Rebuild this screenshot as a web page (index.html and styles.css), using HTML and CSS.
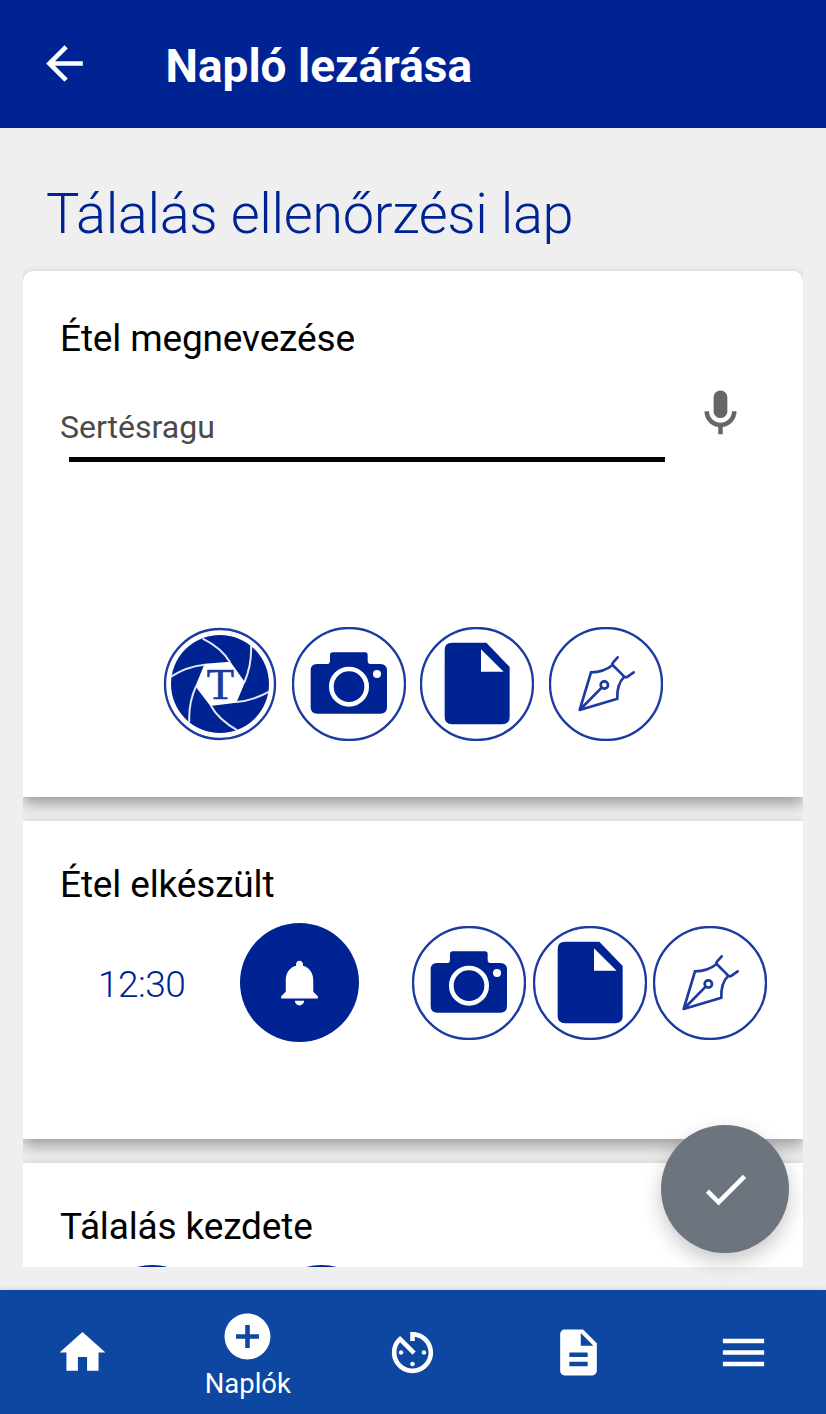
FILE: index.html
```html
<!DOCTYPE html>
<html lang="hu">

<head>
    <meta charset="UTF-8">
    <meta name="viewport" content="width=device-width, initial-scale=1.0">
    <title>Napló lezárása</title>
    <link rel="stylesheet" href="styles.css">
</head>

<body>

    <!-- Shared button icons -->
    <svg class="sprite" width="0" height="0">
        <symbol id="camera" viewBox="0 0 342 342">
            <circle class="ring" cx="171" cy="171" r="168" />
            <path class="fill" d="M74 111h30q10 0 10-10V84q0-8 8-8h97q8 0 8 8v17q0 10 10 10h28q20 0 20 20v109q0 20-20 20H76q-20 0-20-20V131q0-20 18-20z" />
            <circle class="lens" cx="171" cy="179" r="53" />
            <circle class="paper" cx="255" cy="141" r="12" />
        </symbol>
        <symbol id="document" viewBox="0 0 342 342">
            <circle class="ring" cx="171" cy="171" r="168" />
            <path class="fill" d="M96 47H199L269 120V270q0 22-22 22H96q-22 0-22-22V69q0-22 22-22z" />
            <path class="paper" d="M183 67V134H251z" />
        </symbol>
        <symbol id="pen" viewBox="0 0 342 342">
            <circle class="ring" cx="171" cy="171" r="168" />
            <path class="line" d="M92 249L126 136Q164 136 191 114L226 149Q203 172 205 215L92 249L158 182M206 91L192 107Q188 111 192 115M222 146Q228 153 234 150L254 136" />
            <circle class="line" cx="166" cy="174" r="11" />
        </symbol>
    </svg>

    <header class="topbar">
        <svg class="icon" viewBox="0 0 24 24"><path d="M20 11H7.83l5.59-5.59L12 4l-8 8 8 8 1.41-1.41L7.83 13H20v-2z" /></svg>
        <h1>Napló lezárása</h1>
    </header>

    <main class="content">
        <h2 class="page-title">Tálalás ellenőrzési lap</h2>

        <section class="card card-name">
            <h3>Étel megnevezése</h3>
            <div class="field">
                <div class="field-input">
                    <span>Sertésragu</span>
                </div>
                <svg class="icon mic" viewBox="0 0 24 24"><path d="M12 14c1.66 0 2.99-1.34 2.99-3L15 5c0-1.66-1.34-3-3-3S9 3.34 9 5v6c0 1.66 1.34 3 3 3zm5-3c0 2.76-2.24 5-5 5s-5-2.24-5-5H5c0 3.53 2.61 6.43 6 6.92V21h2v-3.08c3.39-.49 6-3.39 6-6.92h-2z" /></svg>
            </div>
            <div class="actions">
                <svg class="action" viewBox="0 0 342 342">
                    <circle class="ring" cx="171" cy="171" r="165" />
                    <circle class="fill" cx="171" cy="171" r="147" />
                    <path class="paper" d="M125 110L202 104L246 166L220 227L142 237L97 178z" />
                    <path class="blades" d="M119 35Q176 63 201 106M264 56Q267 113 244 166M318 194Q271 221 219 225M223 310Q166 278 143 235M79 285Q76 228 99 178M24 149Q71 118 126 113" />
                    <text x="172" y="216" text-anchor="middle">T</text>
                </svg>
                <svg class="action"><use href="#camera" /></svg>
                <svg class="action"><use href="#document" /></svg>
                <svg class="action"><use href="#pen" /></svg>
            </div>
        </section>

        <section class="card card-ready">
            <h3>Étel elkészült</h3>
            <div class="time-row">
                <span class="time">12:30</span>
                <div class="bell">
                    <svg class="icon" viewBox="0 0 24 24"><path d="M12 22c1.1 0 2-.9 2-2h-4c0 1.1.89 2 2 2zm6-6v-5c0-3.07-1.64-5.64-4.5-6.32V4c0-.83-.67-1.5-1.5-1.5s-1.5.67-1.5 1.5v.68C7.63 5.36 6 7.92 6 11v5l-2 2v1h16v-1l-2-2z" /></svg>
                </div>
                <div class="actions">
                    <svg class="action"><use href="#camera" /></svg>
                    <svg class="action"><use href="#document" /></svg>
                    <svg class="action"><use href="#pen" /></svg>
                </div>
            </div>
        </section>

        <section class="card card-start">
            <h3>Tálalás kezdete</h3>
            <div class="start-row">
                <div class="bell"></div>
                <div class="bell"></div>
            </div>
        </section>
    </main>

    <!-- Floating save button -->
    <div class="fab">
        <svg class="icon" viewBox="0 0 24 24"><path d="M9 16.17L4.83 12l-1.42 1.41L9 19 21 7l-1.41-1.41z" /></svg>
    </div>

    <nav class="bottom-nav">
        <a><svg class="icon" viewBox="0 0 24 24"><path d="M10 20v-6h4v6h5v-8h3L12 3 2 12h3v8z" /></svg></a>
        <a class="active">
            <svg class="icon" viewBox="0 0 24 24"><path d="M12 2C6.48 2 2 6.48 2 12s4.48 10 10 10 10-4.48 10-10S17.52 2 12 2zm5 11h-4v4h-2v-4H7v-2h4V7h2v4h4v2z" /></svg>
            <span>Naplók</span>
        </a>
        <a><svg class="icon" viewBox="0 0 24 24"><path d="M11 17c0 .55.45 1 1 1s1-.45 1-1-.45-1-1-1-1 .45-1 1zm0-14v4h2V5.08c3.39.49 6 3.39 6 6.92 0 3.87-3.13 7-7 7s-7-3.13-7-7c0-1.68.59-3.22 1.58-4.42L12 13l1.41-1.41-6.8-6.8v.02C4.42 6.45 3 9.05 3 12c0 4.97 4.02 9 9 9 4.97 0 9-4.03 9-9s-4.03-9-9-9h-1zm7 9c0-.55-.45-1-1-1s-1 .45-1 1 .45 1 1 1 1-.45 1-1zM6 12c0 .55.45 1 1 1s1-.45 1-1-.45-1-1-1-1 .45-1 1z" /></svg></a>
        <a><svg class="icon" viewBox="0 0 24 24"><path d="M14 2H6c-1.1 0-1.99.9-1.99 2L4 20c0 1.1.89 2 1.99 2H18c1.1 0 2-.9 2-2V8l-6-6zm2 16H8v-2h8v2zm0-4H8v-2h8v2zm-3-5V3.5L18.5 9H13z" /></svg></a>
        <a><svg class="icon" viewBox="0 0 24 24"><path d="M3 18h18v-2H3v2zm0-5h18v-2H3v2zm0-7v2h18V6H3z" /></svg></a>
    </nav>

</body>

</html>
```

FILE: styles.css
```css
* {
    box-sizing: border-box;
}

body {
    margin: 0;
    height: 1414px;
    overflow: hidden;
    display: flex;
    flex-direction: column;
    background: #efefef;
    font-family: Roboto, sans-serif;
}

h1, h2, h3 {
    margin: 0;
}

.sprite {
    position: absolute;
}

.icon {
    display: block;
    width: 55px;
    height: 55px;
    fill: #fff;
    flex: none;
}

/* Header */
.topbar {
    height: 128px;
    flex: none;
    display: flex;
    align-items: center;
    gap: 74px;
    padding: 0 0 1px 36.5px;
    background: #002394;
    color: #fff;
}

.topbar h1 {
    font-size: 46px;
    line-height: 54px;
    font-weight: 700;
    padding-top: 4px;
}

.content {
    width: 780px;
    height: 1139px;
    margin: 0 23px 23px;
    flex: none;
    overflow: hidden;
}

.page-title {
    height: 143px;
    padding: 53px 0 0 23px;
    font-size: 56px;
    line-height: 66px;
    font-weight: 300;
    letter-spacing: -0.37px;
    color: #002394;
}

.card {
    background: #fff;
    margin-bottom: 24px;
    padding: 0 37px;
    box-shadow: 0 8px 14px rgba(0, 0, 0, 0.3), 0 0 7px rgba(0, 0, 0, 0.08);
}

.card h3 {
    font-size: 37px;
    line-height: 44px;
    font-weight: 400;
    letter-spacing: -0.15px;
    color: #000;
}

.card-name {
    height: 526px;
    padding-top: 46px;
    border-radius: 10px 10px 0 0;
}

.field {
    display: flex;
    gap: 28px;
    margin-top: 25px;
}

.field-input {
    width: 605px;
    height: 76px;
    padding-top: 21px;
    font-size: 32px;
    line-height: 40px;
    color: #4a4a4a;
}

.field-input::after {
    content: "";
    display: block;
    height: 5px;
    margin: 10px 0 0 9px;
    background: #000;
}

.mic {
    fill: #666;
}

.actions {
    display: flex;
}

.action {
    width: 114px;
    height: 114px;
    flex: none;
}

.card-name .actions {
    gap: 14.5px;
    margin: 165px 0 0 103px;
}

.ring {
    fill: #fff;
    stroke: #1c3aa0;
    stroke-width: 7;
}

.fill {
    fill: #002394;
}

.paper {
    fill: #fff;
}

.lens {
    fill: none;
    stroke: #fff;
    stroke-width: 14;
}

.line {
    fill: none;
    stroke: #1c3aa0;
    stroke-width: 8;
    stroke-linecap: round;
}

.blades {
    fill: none;
    stroke: #e4e8f6;
    stroke-width: 6;
}

.action text {
    font-family: "Liberation Serif", serif;
    font-size: 134px;
    fill: #1c3aa0;
    stroke: #1c3aa0;
    stroke-width: 2;
}

.card-ready {
    height: 318px;
    padding-top: 42px;
}

.time-row {
    display: flex;
    align-items: center;
    margin-top: 16px;
}

.time {
    width: 180px;
    flex: none;
    padding: 4px 0 0 38px;
    font-size: 37px;
    line-height: 44px;
    font-weight: 300;
    letter-spacing: -0.5px;
    color: #002394;
}

.bell {
    width: 119px;
    height: 119px;
    flex: none;
    display: flex;
    align-items: center;
    justify-content: center;
    border-radius: 50%;
    background: #002394;
}

.time-row .actions {
    gap: 6.5px;
    margin-left: 53px;
}

.card-start {
    height: 318px;
    padding-top: 42px;
}

.start-row {
    display: flex;
    gap: 50px;
    margin: 16px 0 0 33px;
}

.fab {
    position: absolute;
    left: 661px;
    top: 1125px;
    width: 128px;
    height: 128px;
    display: flex;
    align-items: center;
    justify-content: center;
    border-radius: 50%;
    background: #6c757d;
    box-shadow: 0 8px 20px rgba(0, 0, 0, 0.22);
}

/* Bottom navigation */
.bottom-nav {
    height: 124px;
    flex: none;
    display: grid;
    grid-template-columns: repeat(5, 1fr);
    background: #0d47a1;
    color: #fff;
    box-shadow: 0 0 6px rgba(0, 0, 0, 0.15);
}

.bottom-nav a {
    display: flex;
    flex-direction: column;
    align-items: center;
    justify-content: center;
}

.bottom-nav .active {
    justify-content: flex-start;
    padding-top: 19px;
}

.bottom-nav span {
    font-size: 27.5px;
    line-height: 32px;
    margin-top: 4px;
}
```
